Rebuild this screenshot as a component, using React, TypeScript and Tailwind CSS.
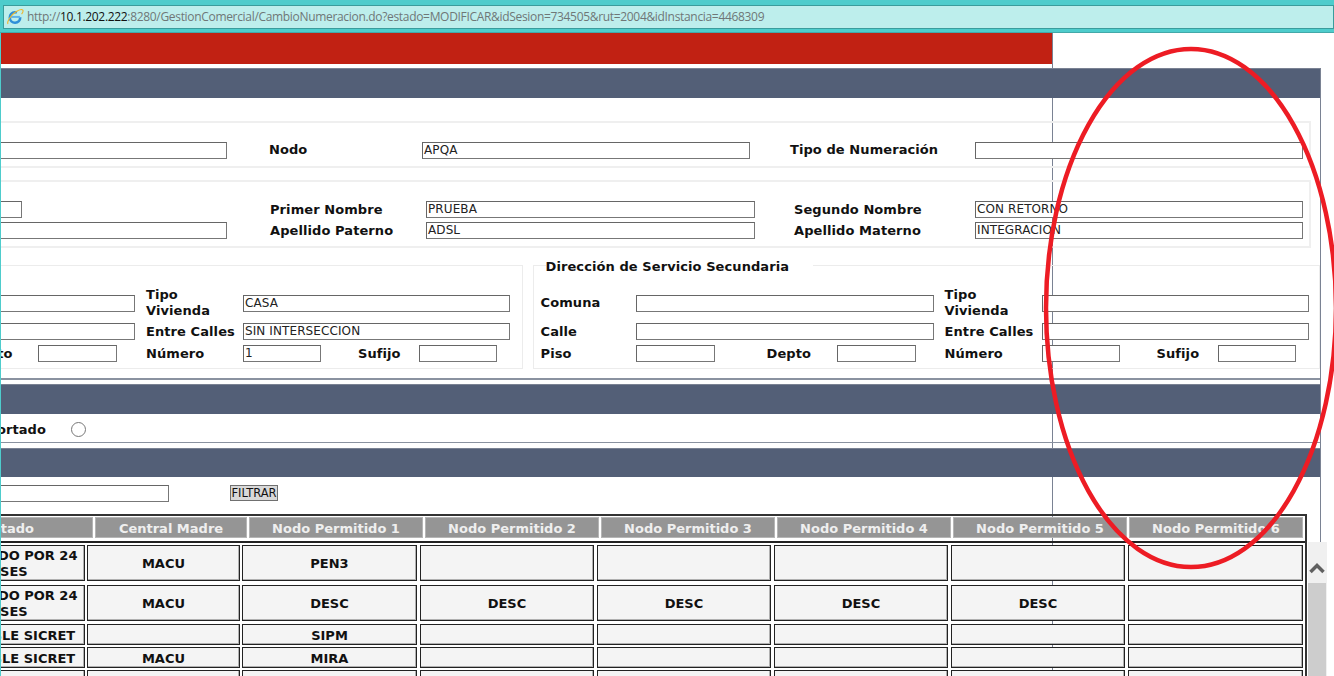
import React from "react";

const font = { fontFamily: '"DejaVu Sans", Verdana, sans-serif' };

function Field({ w, ml = "", value = "" }: { w: string; ml?: string; value?: string }) {
  return (
    <div className={`${w} ${ml} h-[17px] shrink-0 bg-white border border-t-[#666] border-l-[#666] border-r-[#777] border-b-[#777] pl-[1px] text-[12px] leading-[15px] tracking-[0.1px] text-[#222] whitespace-nowrap overflow-hidden`}>
      {value}
    </div>
  );
}

function Label({ w, ml = "", children, right = false }: { w: string; ml?: string; children: React.ReactNode; right?: boolean }) {
  return (
    <div className={`${w} ${ml} shrink-0 text-[13px] leading-[16px] tracking-[0.08px] font-bold text-[#111] ${right ? "text-right whitespace-nowrap" : ""}`}>
      {children}
    </div>
  );
}

function Bar({ h = "h-[30px]" }: { h?: string }) {
  return <div className={`${h} bg-[#535f77] border-t border-[#7a8293]`} />;
}

const headers = ["Estado", "Central Madre", "Nodo Permitido 1", "Nodo Permitido 2", "Nodo Permitido 3", "Nodo Permitido 4", "Nodo Permitido 5", "Nodo Permitido 6"];

const rows = [
  { h: "h-[36px]", m: "", cells: ["BLOQUEADO POR 24 MESES", "MACU", "PEN3", "", "", "", "", ""] },
  { h: "h-[36px]", m: "mt-[4px]", cells: ["BLOQUEADO POR 24 MESES", "MACU", "DESC", "DESC", "DESC", "DESC", "DESC", ""] },
  { h: "h-[21px]", m: "mt-[3px]", cells: ["DISPONIBLE SICRET", "", "SIPM", "", "", "", "", ""] },
  { h: "h-[21px]", m: "mt-[2px]", cells: ["DISPONIBLE SICRET", "MACU", "MIRA", "", "", "", "", ""] },
  { h: "h-[21px]", m: "mt-[2px]", cells: ["", "", "", "", "", "", "", ""] },
];

const cellWidths = ["w-[185px] pl-[21px]", "w-[153px]", "w-[175px]", "w-[174px] ml-[1px]", "w-[174px] ml-[1px]", "w-[174px] ml-[1px]", "w-[174px] ml-[1px]", "w-[175px] ml-[1px]"];

function IeIcon() {
  return (
    <svg width="18" height="18" viewBox="0 0 18 18" className="shrink-0">
      <circle cx="9" cy="9.5" r="5.2" fill="none" stroke="#2f8fd8" strokeWidth="2.6" strokeDasharray="26 7" transform="rotate(-2 9 9.5)" />
      <path d="M4.5 8.9h9.4" stroke="#5fb2e8" strokeWidth="2" />
      <path d="M2 16C.6 13.6 5 7 9.6 4c3.2-2.1 6.2-3 7.2-1.9.7.8 0 2.4-1.2 4" fill="none" stroke="#efb52a" strokeWidth="1.1" />
    </svg>
  );
}

export default function App() {
  return (
    <div className="w-[1334px] h-[676px] relative overflow-hidden bg-white" style={font}>
      {/* address bar */}
      <div className="h-[33px] bg-[#4ecccc] border-b border-[#43a9a9] pt-[5px] pl-[3px]">
        <div className="h-[24px] bg-[#bdeeec] border border-[#3a9c9c] flex items-center pl-[2px] gap-[3px] text-[12px] text-[#6f7777]" style={{ fontFamily: '"Open Sans", sans-serif' }}>
          <IeIcon />
          <span className="whitespace-nowrap tracking-[-0.32px]">
            http://<span className="text-[#111]">10.1.202.222</span>:8280/GestionComercial/CambioNumeracion.do?estado=MODIFICAR&amp;idSesion=734505&amp;rut=2004&amp;idInstancia=4468309
          </span>
        </div>
      </div>

      {/* page */}
      <div className="relative h-[643px] border-l border-[#4ecccc] overflow-hidden">
        <div className="absolute left-[1051px] top-0 bottom-0 w-px bg-[#7a8293]" />

        <div className="relative -ml-[101px] w-[1421px]">
          <div className="h-[31px] w-[1152px] bg-[#c12113]" />

          <div className="mt-[4px] border-r border-[#7a8293] h-[620px]">
            <Bar />

            {/* fieldset 1 */}
            <div className="mt-[23px] w-[1411px] h-[47px] border-2 border-[#efefef] pt-[11px] flex items-center">
              <Field w="w-[325px]" />
              <Label w="w-[153px]" ml="ml-[42px]">Nodo</Label>
              <Field w="w-[328px]" value="APQA" />
              <Label w="w-[185px]" ml="ml-[40px]">Tipo de Numeración</Label>
              <Field w="w-[328px]" />
            </div>

            {/* fieldset 2 */}
            <div className="mt-[12px] w-[1411px] h-[68px] border-2 border-[#efefef] pt-[12px] flex flex-col justify-center gap-[4px]">
              <div className="flex items-center">
                <Field w="w-[120px]" />
                <Label w="w-[156px]" ml="ml-[248px]">Primer Nombre</Label>
                <Field w="w-[329px]" value="PRUEBA" />
                <Label w="w-[181px]" ml="ml-[39px]">Segundo Nombre</Label>
                <Field w="w-[328px]" value="CON RETORNO" />
              </div>
              <div className="flex items-center">
                <Field w="w-[325px]" />
                <Label w="w-[156px]" ml="ml-[43px]">Apellido Paterno</Label>
                <Field w="w-[329px]" value="ADSL" />
                <Label w="w-[181px]" ml="ml-[39px]">Apellido Materno</Label>
                <Field w="w-[328px]" value="INTEGRACION" />
              </div>
            </div>

            {/* addresses */}
            <div className="mt-[7px] flex items-start gap-[10px]">
              <div className="mt-[10px] w-[623px] h-[104px] border border-[#ececec] pt-[21px] flex flex-col gap-[3px]">
                <div className="flex items-center h-[32px]">
                  <Field w="w-[234px]" />
                  <Label w="w-[97px]" ml="ml-[11px]">Tipo Vivienda</Label>
                  <Field w="w-[267px]" value="CASA" />
                </div>
                <div className="flex items-center mt-[1px]">
                  <Field w="w-[234px]" />
                  <Label w="w-[97px]" ml="ml-[11px]">Entre Calles</Label>
                  <Field w="w-[267px]" value="SIN INTERSECCION" />
                </div>
                <div className="flex items-center mt-[2px]">
                  <Label w="w-[70px]" ml="ml-[67px]">Depto</Label>
                  <Field w="w-[79px]" />
                  <Label w="w-[97px]" ml="ml-[29px]">Número</Label>
                  <Field w="w-[78px]" value="1" />
                  <Label w="w-[61px]" ml="ml-[37px]">Sufijo</Label>
                  <Field w="w-[78px]" />
                </div>
              </div>

              <fieldset className="w-[788px] h-[114px] border border-[#ececec] pl-[7px] flex flex-col gap-[3px]">
                <legend className="ml-[5px] pt-[4px] pr-[24px] text-[13px] leading-[16px] tracking-[0.08px] font-bold text-[#111]">Dirección de Servicio Secundaria</legend>
                <div className="flex items-center h-[32px] mt-[12px]">
                  <Label w="w-[95px]">Comuna</Label>
                  <Field w="w-[298px]" />
                  <Label w="w-[97px]" ml="ml-[11px]">Tipo Vivienda</Label>
                  <Field w="w-[267px]" />
                </div>
                <div className="flex items-center mt-[1px]">
                  <Label w="w-[95px]">Calle</Label>
                  <Field w="w-[298px]" />
                  <Label w="w-[97px]" ml="ml-[11px]">Entre Calles</Label>
                  <Field w="w-[267px]" />
                </div>
                <div className="flex items-center mt-[2px]">
                  <Label w="w-[95px]">Piso</Label>
                  <Field w="w-[79px]" />
                  <Label w="w-[70px]" ml="ml-[52px]">Depto</Label>
                  <Field w="w-[79px]" />
                  <Label w="w-[97px]" ml="ml-[29px]">Número</Label>
                  <Field w="w-[78px]" />
                  <Label w="w-[61px]" ml="ml-[37px]">Sufijo</Label>
                  <Field w="w-[78px]" />
                </div>
              </fieldset>
            </div>

            <div className="mt-[9px] border-t-2 border-[#8a92a0]" />
            <div className="mt-[4px]"><Bar /></div>

            <div className="h-[29px] pt-[3px] flex items-center border-b border-[#8a92a0]">
              <Label w="w-[146px]" right>Soportado</Label>
              <div className="ml-[25px] w-[15px] h-[15px] rounded-full border border-[#777] bg-white" />
            </div>

            <div className="mt-[5px]"><Bar h="h-[29px]" /></div>

            <div className="mt-[8px] flex items-start">
              <Field w="w-[269px]" />
              <div className="ml-[61px] w-[48px] h-[16px] bg-[#d9d9d9] border border-[#707070] text-[11.5px] leading-[14px] text-center text-[#111] whitespace-nowrap">FILTRAR</div>
            </div>

            {/* table */}
            <div className="mt-[12px] w-[1407px] border-t-2 border-r-2 border-[#333] h-[170px] overflow-hidden">
              <div className="pt-[1px] flex gap-[2px]">
                {headers.map((h, i) => (
                  <div
                    key={h}
                    className={`${i === 0 ? "w-[193px] pl-[25px]" : i === 1 ? "w-[152px]" : "w-[174px]"} h-[21px] shrink-0 bg-[#959595] border border-[#b5b5b5] text-[13px] font-bold text-[#efefef] text-center leading-[21px] whitespace-nowrap`}
                  >
                    {h}
                  </div>
                ))}
              </div>
              <div className="mt-[3px] h-[2px] bg-[#222]" />
              <div className="mt-[2px]">
                {rows.map((r, i) => (
                  <div key={i} className={`${r.h} ${r.m} flex gap-[2px]`}>
                    {r.cells.map((c, j) => (
                      <div
                        key={j}
                        className={`${cellWidths[j]} shrink-0 h-full pt-[2px] bg-[#f4f4f4] border border-[#222] shadow-[inset_-1px_-1px_0_#b0b0b0] flex items-center justify-center text-center text-[13px] leading-[16px] font-bold text-[#111]`}
                      >
                        {c}
                      </div>
                    ))}
                  </div>
                ))}
              </div>
            </div>
          </div>
        </div>
      </div>

      {/* scrollbar over the table */}
      <div className="absolute left-[1308px] top-[542px] bottom-0 w-[19px] bg-[#f0f0f0]">
        <svg width="18" height="41" viewBox="0 0 18 41">
          <polyline points="2.5,30 9,23.5 15.5,30" fill="none" stroke="#606060" strokeWidth="3.5" />
        </svg>
        <div className="w-[18px] h-[94px] bg-[#cdcdcd]" />
      </div>

      {/* hand-drawn red ellipse */}
      <svg className="absolute inset-0 pointer-events-none" width="1334" height="676" viewBox="0 0 1334 676">
        <ellipse cx="1191" cy="308" rx="145" ry="259" fill="none" stroke="#ed1c24" strokeWidth="4.5" />
      </svg>
    </div>
  );
}
